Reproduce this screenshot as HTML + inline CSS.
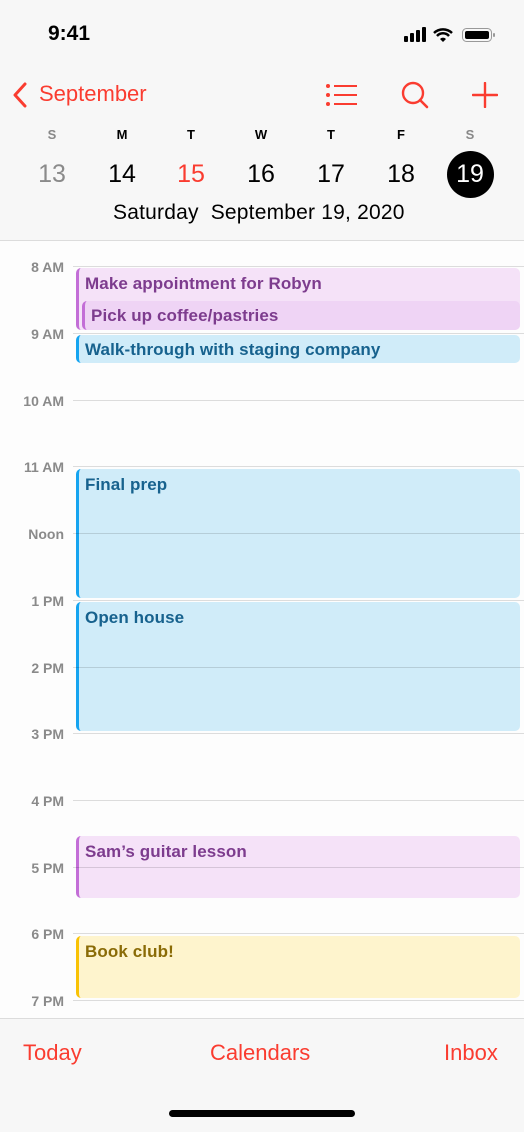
<!DOCTYPE html>
<html><head><meta charset="utf-8"><style>
*{margin:0;padding:0;box-sizing:border-box}
body{width:524px;height:1132px;overflow:hidden;background:#fdfdfd;font-family:"Liberation Sans",sans-serif;position:relative}
.a{position:absolute}
.hdr{left:0;top:0;width:524px;height:241px;background:#f7f7f7;border-bottom:1px solid #dcdcdc}
.red{color:#fa3c30}
.dw{top:127px;font-size:13px;font-weight:bold;width:40px;text-align:center;margin-left:-20px}
.dn{top:160px;font-size:25px;width:50px;text-align:center;margin-left:-25px}
.hl{left:73px;width:451px;height:1px;background:rgba(0,0,0,0.13);z-index:2}
.ht{left:0;width:64px;text-align:right;font-size:14px;color:#8a8a8a;font-weight:bold}
.ev{left:76px;right:4px;border-radius:5px;border-left:3px solid;font-size:17px;font-weight:bold;padding:6px 0 0 6px;letter-spacing:0.1px}
.pu{background:#f5e2f8;border-color:#c36ed7;color:#7d3c8e}
.bl{background:#d0ecf9;border-color:#15a4f0;color:#17628e}
.ye{background:#fef4cd;border-color:#f9c204;color:#8a6b06}
.bot{left:0;top:1018px;width:524px;height:114px;background:#f7f7f7;border-top:1px solid #dcdcdc}
.bt{top:1040px;font-size:22px;color:#fa3c30}
</style></head><body>
<div class="a hdr"></div>
<div class="a" style="left:48px;top:22px;font-size:21px;font-weight:bold">9:41</div>
<svg class="a" style="left:404px;top:26px" width="92" height="18" viewBox="0 0 92 18">
<rect x="0" y="10" width="4" height="6" rx="1"/><rect x="6" y="7" width="4" height="9" rx="1"/><rect x="12" y="4" width="4" height="12" rx="1"/><rect x="18" y="1" width="4" height="15" rx="1"/>
<path d="M30 7a13 13 0 0 1 18 0M33 10a8 8 0 0 1 12 0" stroke="#000" stroke-width="2.5" fill="none"/><path d="M36 13l3 3 3-3a4 4 0 0 0-6 0z"/>
<rect x="58.5" y="2.5" width="29" height="13" rx="4" fill="none" stroke="#999"/><rect x="61" y="5" width="24" height="8" rx="2"/><rect x="89" y="7" width="2" height="4" rx="1" fill="#999"/></svg>
<svg class="a" style="left:12px;top:82px" width="16" height="26"><path d="M13 2L3 13l10 11" stroke="#fa3c30" stroke-width="3" fill="none" stroke-linecap="round" stroke-linejoin="round"/></svg>
<div class="a red" style="left:39px;top:81px;font-size:22px">September</div>
<svg class="a" style="left:325px;top:82px" width="34" height="26"><g fill="#fa3c30"><circle cx="3" cy="4" r="2"/><circle cx="3" cy="13" r="2"/><circle cx="3" cy="22" r="2"/></g><g stroke="#fa3c30" stroke-width="2"><path d="M9 4h23M9 13h23M9 22h23"/></g></svg>
<svg class="a" style="left:400px;top:80px" width="30" height="30"><circle cx="13" cy="13" r="10" stroke="#fa3c30" stroke-width="2.4" fill="none"/><path d="M20 20l7 7" stroke="#fa3c30" stroke-width="2.6" stroke-linecap="round"/></svg>
<svg class="a" style="left:472px;top:82px" width="26" height="26"><path d="M13 1v24M1 13h24" stroke="#fa3c30" stroke-width="2.4" stroke-linecap="round"/></svg>
<div class="a dw" style="left:52px;color:#888">S</div><div class="a dw" style="left:122px">M</div><div class="a dw" style="left:191px">T</div><div class="a dw" style="left:261px">W</div><div class="a dw" style="left:331px">T</div><div class="a dw" style="left:401px">F</div><div class="a dw" style="left:470px;color:#888">S</div>
<div class="a dn" style="left:52px;color:#8a8a8a">13</div><div class="a dn" style="left:122px">14</div><div class="a dn red" style="left:191px">15</div><div class="a dn" style="left:261px">16</div><div class="a dn" style="left:331px">17</div><div class="a dn" style="left:401px">18</div>
<div class="a" style="left:447px;top:151px;width:47px;height:47px;border-radius:50%;background:#000"></div>
<div class="a dn" style="left:470px;color:#fff">19</div>
<div class="a" style="left:113px;top:201px;font-size:21px;letter-spacing:0.2px">Saturday&nbsp; September 19, 2020</div>

<div class="a hl" style="top:266px"></div><div class="a ht" style="top:259px">8 AM</div>
<div class="a hl" style="top:333px"></div><div class="a ht" style="top:326px">9 AM</div>
<div class="a hl" style="top:400px"></div><div class="a ht" style="top:393px">10 AM</div>
<div class="a hl" style="top:466px"></div><div class="a ht" style="top:459px">11 AM</div>
<div class="a hl" style="top:533px"></div><div class="a ht" style="top:526px">Noon</div>
<div class="a hl" style="top:600px"></div><div class="a ht" style="top:593px">1 PM</div>
<div class="a hl" style="top:667px"></div><div class="a ht" style="top:660px">2 PM</div>
<div class="a hl" style="top:733px"></div><div class="a ht" style="top:726px">3 PM</div>
<div class="a hl" style="top:800px"></div><div class="a ht" style="top:793px">4 PM</div>
<div class="a hl" style="top:867px"></div><div class="a ht" style="top:860px">5 PM</div>
<div class="a hl" style="top:933px"></div><div class="a ht" style="top:926px">6 PM</div>
<div class="a hl" style="top:1000px"></div><div class="a ht" style="top:993px">7 PM</div>

<div class="a ev pu" style="top:268px;height:62px;padding-top:6px">Make appointment for Robyn</div>
<div class="a ev pu" style="left:82px;top:301px;height:29px;background:#efd4f5;padding-top:5px">Pick up coffee/pastries</div>
<div class="a ev bl" style="top:335px;height:28px;padding-top:5px">Walk-through with staging company</div>
<div class="a ev bl" style="top:469px;height:129px">Final prep</div>
<div class="a ev bl" style="top:602px;height:129px">Open house</div>
<div class="a ev pu" style="top:836px;height:62px">Sam’s guitar lesson</div>
<div class="a ev ye" style="top:936px;height:62px">Book club!</div>

<div class="a bot"></div>
<div class="a bt" style="left:23px">Today</div>
<div class="a bt" style="left:210px">Calendars</div>
<div class="a bt" style="left:444px">Inbox</div>
<div class="a" style="left:169px;top:1110px;width:186px;height:7px;border-radius:4px;background:#000"></div>
</body></html>
